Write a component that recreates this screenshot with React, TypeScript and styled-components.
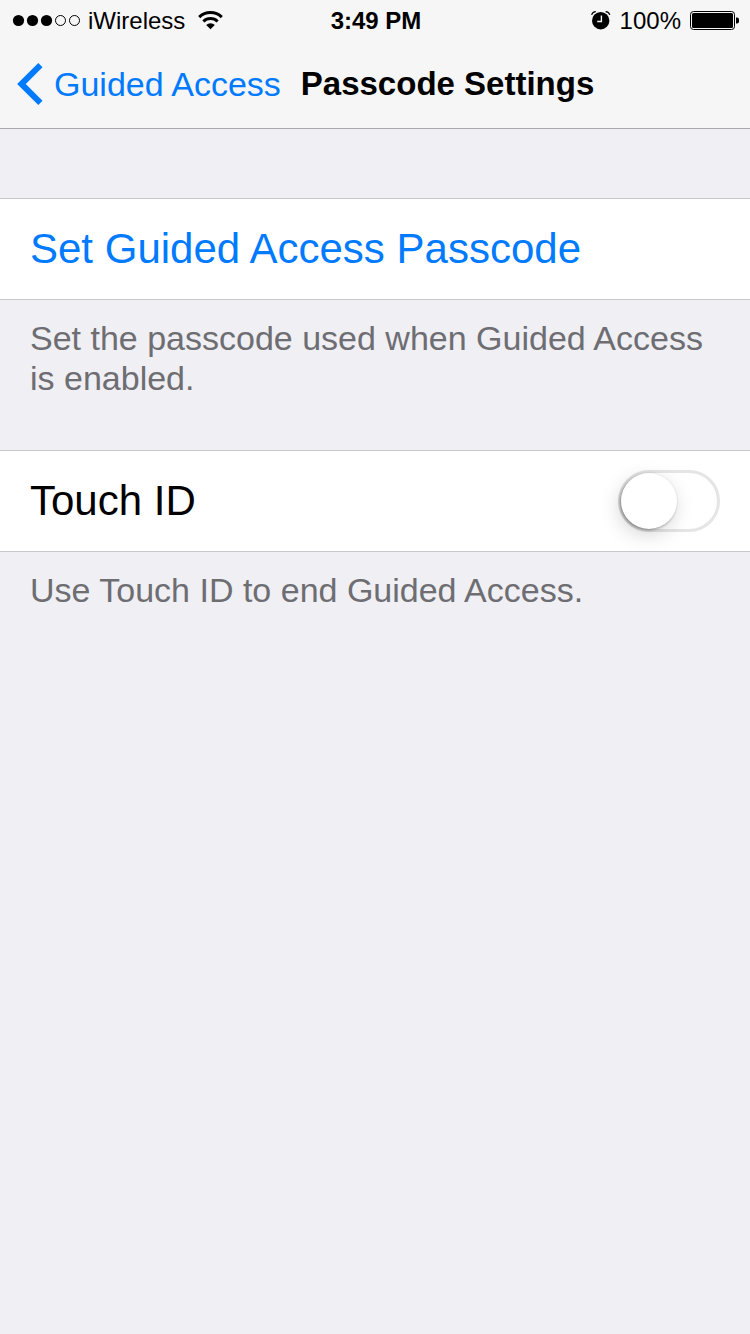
import React, { useState } from "react";
import styled, { createGlobalStyle } from "styled-components";

const GlobalStyle = createGlobalStyle`
  *, *::before, *::after { box-sizing: border-box; }
  body {
    margin: 0;
    background: #efeff4;
    color: #000;
    font-family: "Liberation Sans", "Helvetica Neue", Helvetica, Arial, sans-serif;
  }
`;

const Screen = styled.div`
  min-height: 100vh;
  background: #efeff4;
`;

const Header = styled.header`
  background: #f6f6f6;
  border-bottom: 1px solid #a9a9ad;
`;

const StatusBar = styled.div`
  display: grid;
  grid-template-columns: 1fr auto 1fr;
  align-items: center;
  height: 40px;
  padding: 2px 10px 0 12px;
  font-size: 24px;
  line-height: 38px;
`;

const StatusGroup = styled.div<{ $end?: boolean; $gap: number }>`
  display: flex;
  align-items: center;
  justify-content: ${(p) => (p.$end ? "flex-end" : "flex-start")};
  gap: ${(p) => p.$gap}px;
`;

const Clock = styled.time`
  font-weight: 700;
`;

const Icon = styled.svg`
  display: block;
  flex: none;
`;

const NavBar = styled.nav`
  display: flex;
  align-items: center;
  gap: 20px;
  height: 88px;
  padding: 0 16px;
  white-space: nowrap;
`;

const BackLink = styled.a`
  display: flex;
  align-items: center;
  gap: 10px;
  color: #007aff;
  font-size: 34px;
  line-height: 40px;
  text-decoration: none;
`;

const Title = styled.h1`
  margin: 0;
  font-size: 33px;
  font-weight: 700;
  line-height: 40px;
`;

const Content = styled.main`
  display: flex;
  flex-direction: column;
  gap: 52px;
  padding: 69px 0;
`;

const rowStyles = `
  display: flex;
  align-items: center;
  justify-content: space-between;
  width: 100%;
  min-height: 102px;
  padding: 0 30px;
  border: 0 solid #c8c7cc;
  border-width: 1px 0;
  background: #fff;
  font-family: inherit;
  font-size: 42px;
  line-height: 50px;
  text-align: left;
`;

const ActionRow = styled.button`
  ${rowStyles}
  color: #007aff;
  cursor: pointer;
`;

const SwitchRow = styled.label`
  ${rowStyles}
  color: #000;
`;

const Footnote = styled.p`
  margin: 0;
  padding: 18px 30px 0;
  color: #6d6d72;
  font-size: 34px;
  line-height: 40px;
`;

const Switch = styled.input`
  appearance: none;
  flex: none;
  width: 102px;
  height: 62px;
  margin: 0;
  border: 3px solid #e5e5e5;
  border-radius: 31px;
  background: #fff;
  cursor: pointer;

  &::before {
    content: "";
    display: block;
    width: 56px;
    height: 56px;
    border-radius: 50%;
    background: #fff;
    box-shadow: -1px 1px 3px rgba(0, 0, 0, 0.4), -2px 6px 20px rgba(0, 0, 0, 0.16);
  }

  &:checked {
    border-color: #4cd964;
    background: #4cd964;
  }

  &:checked::before {
    margin-left: auto;
  }
`;

function SignalDots() {
  return (
    <Icon width="69" height="14" viewBox="0 0 69 14" role="img" aria-label="Signal: 3 of 5">
      {[0, 1, 2, 3, 4].map((i) => (
        <circle
          key={i}
          cx={6.5 + i * 14}
          cy="6.5"
          r={i < 3 ? 5.6 : 5}
          fill={i < 3 ? "#000" : "none"}
          stroke={i < 3 ? "none" : "#000"}
        />
      ))}
    </Icon>
  );
}

function WifiIcon() {
  return (
    <Icon width="27" height="20" viewBox="0 0 27 20" role="img" aria-label="Wi-Fi">
      <g fill="none" stroke="#000" strokeWidth="3">
        <path d="M2.200 6.100a16.200 16.200 0 0 1 22.600 0" />
        <path d="M6.400 10.500a10.200 10.200 0 0 1 14.200 0" />
      </g>
      <path d="M13.500 18.300l-4.300-4.300a6.100 6.100 0 0 1 8.600 0z" />
    </Icon>
  );
}

function AlarmIcon() {
  return (
    <Icon width="20" height="20" viewBox="0 0 20 20" role="img" aria-label="Alarm">
      <circle cx="9.700" cy="9.700" r="8.700" />
      <path d="M10.400 4.500v6H6.200" fill="none" stroke="#f6f6f6" strokeWidth="1.400" />
      <path
        d="M.6 3.900Q1.500.9 4.800.6M18.800 3.900Q17.900.9 14.600.6"
        fill="none"
        stroke="#000"
        strokeWidth="1.200"
      />
    </Icon>
  );
}

function BatteryIcon() {
  return (
    <Icon width="50" height="20" viewBox="0 0 50 20" role="img" aria-label="Battery full">
      <rect x="0.500" y="0.500" width="44" height="18" rx="3" fill="none" stroke="#000" />
      <rect x="2" y="2" width="41" height="15" rx="1.500" />
      <path d="M46 6.500h1q2 0 2 2v2q0 2-2 2h-1z" />
    </Icon>
  );
}

export default function App() {
  const [touchId, setTouchId] = useState(false);

  return (
    <Screen>
      <GlobalStyle />
      <Header>
        <StatusBar>
          <StatusGroup $gap={12}>
            <StatusGroup $gap={7}>
              <SignalDots />
              <span>iWireless</span>
            </StatusGroup>
            <WifiIcon />
          </StatusGroup>
          <Clock>3:49 PM</Clock>
          <StatusGroup $gap={9} $end>
            <AlarmIcon />
            <span>100%</span>
            <BatteryIcon />
          </StatusGroup>
        </StatusBar>
        <NavBar>
          <BackLink href="#guided-access">
            <Icon width="28" height="42" viewBox="0 0 28 42" aria-hidden="true">
              <path
                d="M24.400 2.200L5.400 21l19 18.800"
                fill="none"
                stroke="#007aff"
                strokeWidth="6"
              />
            </Icon>
            Guided Access
          </BackLink>
          <Title>Passcode Settings</Title>
        </NavBar>
      </Header>
      <Content>
        <section>
          <ActionRow type="button">Set Guided Access Passcode</ActionRow>
          <Footnote>Set the passcode used when Guided Access is enabled.</Footnote>
        </section>
        <section>
          <SwitchRow>
            Touch ID
            <Switch
              type="checkbox"
              role="switch"
              aria-describedby="touch-id-note"
              checked={touchId}
              onChange={(e) => setTouchId(e.target.checked)}
            />
          </SwitchRow>
          <Footnote id="touch-id-note">Use Touch ID to end Guided Access.</Footnote>
        </section>
      </Content>
    </Screen>
  );
}
